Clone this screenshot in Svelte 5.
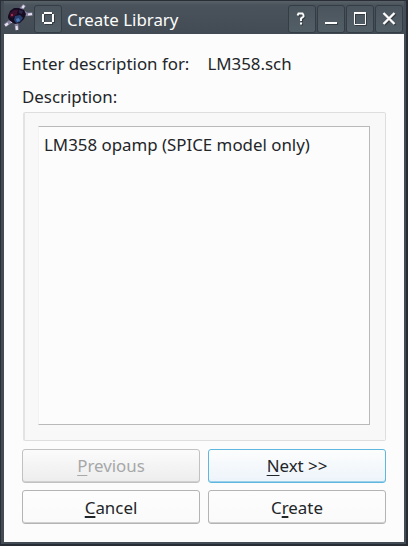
<script>
  const actions = [
    { before: '', key: 'P', after: 'revious', kind: 'disabled' },
    { before: '', key: 'N', after: 'ext >>', kind: 'primary' },
    { before: '', key: 'C', after: 'ancel', kind: 'thick' },
    { before: 'C', key: 'r', after: 'eate', kind: 'thick' }
  ];
</script>

<div class="window">
  <header>
    <svg class="logo" width="30" height="28" viewBox="0 0 30 28">
      <path d="M1 20.500l4-3 4-3M12 16l.5 4 .5 5M20 7.500l3 2 5.500-.5M16 5l2.500-2.500L20.500 0" fill="none" stroke="#85819f" stroke-width="3.600" />
      <path d="M1 20.500l3-2M12.500 21l.5 4M24 9.500l4-.5M18.500 3l1.500-2.500M6.500 17l1.500-1" fill="none" stroke="#e6e2f0" stroke-width="2.200" />
      <path d="M4 11l2-5 4-3 5 0 5 2 2 4-2 5-4 4-5 1-5-3-2-3z" fill="#150c21" />
      <path d="M6 8l4-3 4 0-1 4-5 4-2-1z" fill="#3b1230" />
      <path d="M11 11l5-1 3 3-3 4-4 1-2-3z" fill="#27406f" />
      <path d="M12 14l3-1 1 3-3 1z" fill="#4b78b4" />
      <path d="M15 5l4 1-1 3-3-1z" fill="#2d2447" />
      <path d="M7 9h2v2H7z" fill="#a32b45" />
    </svg>
    <div class="tool pin">
      <svg width="26" height="26" viewBox="0 0 26 26"><path d="M9 7h8M9 17h8M8 8v8M18 8v8" fill="none" stroke="#fcfcfc" stroke-width="2" /></svg>
    </div>
    <h1>Create Library</h1>
    <div class="tool">
      <svg width="26" height="26" viewBox="0 0 26 26"><path d="M8.500 9.500l1-2h4l1 1.500v1.500l-2.500 2v2.500M11 17.500h2" fill="none" stroke="#fcfcfc" stroke-width="1.900" /></svg>
    </div>
    <div class="tool">
      <svg width="26" height="26" viewBox="0 0 26 26"><path d="M7 17h12" stroke="#fcfcfc" stroke-width="2" /></svg>
    </div>
    <div class="tool">
      <svg width="26" height="26" viewBox="0 0 26 26"><path d="M7.500 7v11.500h11V7" fill="none" stroke="#fcfcfc" /><path d="M7 7h12" stroke="#fcfcfc" stroke-width="2" /></svg>
    </div>
    <div class="tool">
      <svg width="26" height="26" viewBox="0 0 26 26"><path d="M7.500 7l11 11M18.500 7l-11 11" stroke="#fcfcfc" stroke-width="2.400" /></svg>
    </div>
  </header>
  <main>
    <div class="row"><span>Enter description for:</span><span class="file">LM358.sch</span></div>
    <div class="label">Description:</div>
    <section>
      <div class="edit">LM358 opamp (SPICE model only)</div>
    </section>
    <div class="buttons">
      {#each actions as a}
        <button class={a.kind} disabled={a.kind === 'disabled'}><span>{a.before}<span class="key">{a.key}</span>{a.after}</span></button>
      {/each}
    </div>
  </main>
</div>

<style>
  .window {
    box-sizing: border-box;
    width: 408px;
    height: 546px;
    display: flex;
    flex-direction: column;
    padding: 0 4px 4px;
    background: #434c54;
    box-shadow: inset 1px 1px #2a2f36, inset -2px -2px #272b33;
    font-family: "Noto Sans", sans-serif;
    font-size: 16.87px;
    color: #232629;
    overflow: hidden;
  }
  header {
    box-sizing: border-box;
    height: 34px;
    flex: none;
    display: flex;
    align-items: center;
    padding: 2px 1px 0 0;
    margin: 1px 0 -1px;
    background: linear-gradient(#596268, #4a535b 4px, #424b53);
  }
  .logo { margin-right: 1px; flex: none; overflow: visible; }
  .tool {
    box-sizing: border-box;
    width: 28px;
    height: 28px;
    flex: none;
    border: 1px solid #353d44;
    border-radius: 3px;
    background: linear-gradient(#4b555d, #525e66);
    margin-left: 1px;
  }
  .pin { margin-left: -1px; }
  .tool svg { display: block; filter: drop-shadow(1px 1px 0 #343c42); }
  h1 {
    margin: 0;
    padding: 1px 0 0 5px;
    flex: 1;
    font-size: 16.87px;
    font-weight: 400;
    line-height: 24px;
    color: #fcfcfc;
    white-space: nowrap;
  }
  main {
    flex: 1;
    background: #fcfcfc;
    padding: 18px 18px 0;
  }
  .row, .label { height: 24px; line-height: 24px; white-space: nowrap; }
  .row { display: flex; }
  .file { margin-left: 18px; }
  .label { margin-top: 9px; }
  section {
    box-sizing: border-box;
    height: 329px;
    margin: 3px 0 0 1px;
    padding: 13px 15px 14px 13px;
    border: 1px solid #dedede;
    border-left-width: 2px;
    border-left-color: #e3e3e3;
    border-radius: 2px;
    background: #f8f8f8;
  }
  .edit {
    box-sizing: border-box;
    height: 299px;
    padding: 6px 5px;
    border: 1px solid #b9b9b9;
    border-left-color: #f3f3f3;
    background: #fcfcfc;
    line-height: 24px;
    white-space: nowrap;
  }
  .buttons {
    display: grid;
    grid-template-columns: 1fr 1fr;
    gap: 7px 8px;
    margin-top: 8px;
  }
  button {
    box-sizing: border-box;
    height: 34px;
    padding: 0;
    border: 1px solid #b4b4b4;
    border-radius: 3px;
    background: linear-gradient(#fdfdfd, #fafafa);
    font: inherit;
    line-height: 24px;
    color: #232629;
    box-shadow: inset 0 -1px #d0d0d0;
  }
  .disabled { color: #a6a8a9; background: linear-gradient(#fbfbfb, #ededed); border-color: #c1c1c1; }
  .primary { border-color: #5fb7df; background: linear-gradient(#fdfdfd, #edf4fa); box-shadow: inset 0 -1px #9bd0eb; }
  .thick { padding-top: 2px; }
  .key { text-decoration: underline; text-decoration-thickness: 1px; text-underline-offset: 3px; text-decoration-skip-ink: none; }
  .thick .key { text-decoration-thickness: 2px; text-underline-offset: 2px; }
</style>
